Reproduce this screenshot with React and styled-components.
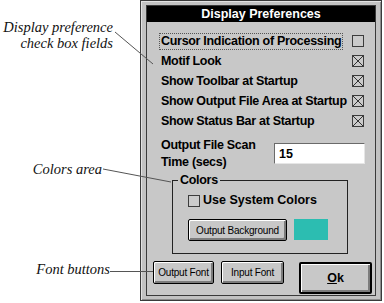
import React from "react";
import styled, { createGlobalStyle } from "styled-components";

const Global = createGlobalStyle`
  html, body { margin: 0; padding: 0; background: #fff; }
  * { -webkit-font-smoothing: antialiased; }
`;

const ui = `"Liberation Sans", Arial, sans-serif`;

const Page = styled.div`
  position: relative;
  display: flex;
  align-items: flex-start;
  width: 384px;
  height: 303px;
  background: #fff;
  overflow: hidden;
`;

const Annotations = styled.div`
  width: 140px;
  flex: none;
  display: flex;
  flex-direction: column;
  align-items: flex-end;
`;

const Note = styled.div`
  margin-top: ${(p) => p.$top}px;
  margin-right: ${(p) => p.$right}px;
  font: italic 14.5px/16px "Liberation Serif", "Times New Roman", serif;
  color: #111;
  text-align: right;
  white-space: nowrap;
`;

const Leaders = styled.svg`
  position: absolute;
  left: 0;
  top: 0;
  pointer-events: none;
`;

const Dialog = styled.div`
  flex: none;
  width: 242px;
  height: 301px;
  box-sizing: border-box;
  display: flex;
  border: 1px solid #3a3a3a;
  padding: 4px 5px;
  background: #c2c2c2;
  box-shadow: inset 1px 1px 0 #e2e2e2, inset -1px -1px 0 #8c8c8c;
`;

const Window = styled.div`
  flex: 1;
  display: flex;
  flex-direction: column;
  border: 1px solid #3a3a3a;
  background: #c8c8c8;
`;

const TitleBar = styled.div`
  flex: none;
  height: 16px;
  background: #000;
  color: #fff;
  font: bold 12.5px/16px ${ui};
  text-align: center;
`;

const Body = styled.div`
  flex: 1;
  display: flex;
  flex-direction: column;
  padding-top: 9px;
`;

const CheckList = styled.div`
  display: flex;
  flex-direction: column;
  padding: 0 11px 0 12px;
`;

const CheckRow = styled.div`
  height: 20px;
  display: flex;
  align-items: center;
  justify-content: space-between;
`;

const RowLabel = styled.span`
  font: bold 12.5px/15px ${ui};
  letter-spacing: -0.3px;
  color: #000;
  padding: 0 1px;
  border: 1px dotted ${(p) => (p.$focused ? "#555" : "transparent")};
  white-space: nowrap;
`;

const Box = styled.span`
  flex: none;
  width: 12px;
  height: 12px;
  box-sizing: border-box;
  border: 1px solid #3c3c3c;
  display: inline-flex;
  background: #cbcbcb;
`;

const Scan = styled.div`
  display: grid;
  grid-template-columns: 113px 91px;
  align-items: start;
  margin-top: 6px;
  padding-left: 14px;
`;

const ScanLabel = styled.div`
  font: bold 12.5px/17px ${ui};
  letter-spacing: -0.3px;
  color: #000;
`;

const TextInput = styled.input`
  width: 91px;
  height: 21px;
  box-sizing: border-box;
  margin: 6px 0 0;
  padding: 0 0 0 4px;
  border-style: solid;
  border-width: 1px;
  border-color: #6a6a6a #e6e6e6 #e6e6e6 #6a6a6a;
  background: #fff;
  font: bold 12.5px ${ui};
  color: #000;
  outline: none;
`;

const Group = styled.fieldset`
  margin: 2px 0 0 25px;
  width: 176px;
  box-sizing: border-box;
  border: 1px solid #222;
  padding: 0 0 12px 0;
  min-inline-size: auto;
`;

const Legend = styled.legend`
  margin-left: 5px;
  padding: 0 2px;
  font: bold 12.5px/15px ${ui};
  letter-spacing: -0.3px;
  color: #000;
`;

const GroupBody = styled.div`
  padding: 4px 0 0 15px;
`;

const SysRow = styled.label`
  display: flex;
  align-items: center;
  gap: 3px;
  height: 17px;
  font: bold 12.5px/17px ${ui};
  color: #000;
`;

const ColorRow = styled.div`
  display: flex;
  align-items: flex-start;
  gap: 7px;
  margin-top: 10px;
`;

const Button = styled.button`
  flex: none;
  width: ${(p) => p.$w}px;
  height: ${(p) => p.$h || 22}px;
  margin: ${(p) => p.$mt || 0}px 0 0 ${(p) => (p.$push ? "auto" : "0")};
  padding: 0;
  box-sizing: border-box;
  border: ${(p) => (p.$default ? 2 : 1)}px solid #000;
  border-radius: 2px;
  background: #c8c8c8;
  box-shadow: inset 1px 1px 0 #fff, inset -2px -2px 0 #7c7c7c;
  font: ${(p) => (p.$bold ? "bold 12.5px" : "10px")} ${ui};
  letter-spacing: ${(p) => (p.$bold ? "0" : "-0.2px")};
  color: #000;
  outline: none;
  cursor: default;
`;

const Swatch = styled.div`
  width: 34px;
  height: 21px;
  background: #2cbdb1;
`;

const Footer = styled.div`
  display: flex;
  align-items: flex-start;
  gap: 7px;
  margin-top: 7px;
  padding: 0 3px 0 6px;
`;

const Check = ({ checked }) => (
  <Box>
    {checked && (
      <svg width="10" height="10" viewBox="0 0 10 10">
        <path d="M0 0L10 10M10 0L0 10" stroke="#333" strokeWidth="1" fill="none" />
      </svg>
    )}
  </Box>
);

const options = [
  { label: "Cursor Indication of Processing", checked: false, focused: true },
  { label: "Motif Look", checked: true },
  { label: "Show Toolbar at Startup", checked: true },
  { label: "Show Output File Area at Startup", checked: true },
  { label: "Show Status Bar at Startup", checked: true },
];

export default function App() {
  return (
    <>
      <Global />
      <Page>
        <Annotations>
          <Note $top={19} $right={27}>
            Display preference
            <br />
            check box fields
          </Note>
          <Note $top={110} $right={38}>Colors area</Note>
          <Note $top={84} $right={30}>Font buttons</Note>
        </Annotations>

        <Dialog>
          <Window>
            <TitleBar>Display Preferences</TitleBar>
            <Body>
              <CheckList>
                {options.map((o) => (
                  <CheckRow key={o.label}>
                    <RowLabel $focused={o.focused}>{o.label}</RowLabel>
                    <Check checked={o.checked} />
                  </CheckRow>
                ))}
              </CheckList>

              <Scan>
                <ScanLabel>
                  Output File Scan
                  <br />
                  Time (secs)
                </ScanLabel>
                <TextInput readOnly value="15" />
              </Scan>

              <Group>
                <Legend>Colors</Legend>
                <GroupBody>
                  <SysRow>
                    <Check checked={false} />
                    Use System Colors
                  </SysRow>
                  <ColorRow>
                    <Button $w={99}>Output Background</Button>
                    <Swatch />
                  </ColorRow>
                </GroupBody>
              </Group>

              <Footer>
                <Button $w={61} $h={23}>Output Font</Button>
                <Button $w={63} $h={23}>Input Font</Button>
                <Button $w={73} $h={32} $mt={1} $push $default $bold>
                  <u>O</u>k
                </Button>
              </Footer>
            </Body>
          </Window>
        </Dialog>

        <Leaders width="384" height="303" viewBox="0 0 384 303">
          <g stroke="#555" strokeWidth="1" fill="none">
            <line x1="115" y1="32" x2="153" y2="64" />
            <line x1="103" y1="169" x2="171" y2="182" />
            <line x1="110" y1="271.5" x2="153" y2="271.5" />
          </g>
        </Leaders>
      </Page>
    </>
  );
}
